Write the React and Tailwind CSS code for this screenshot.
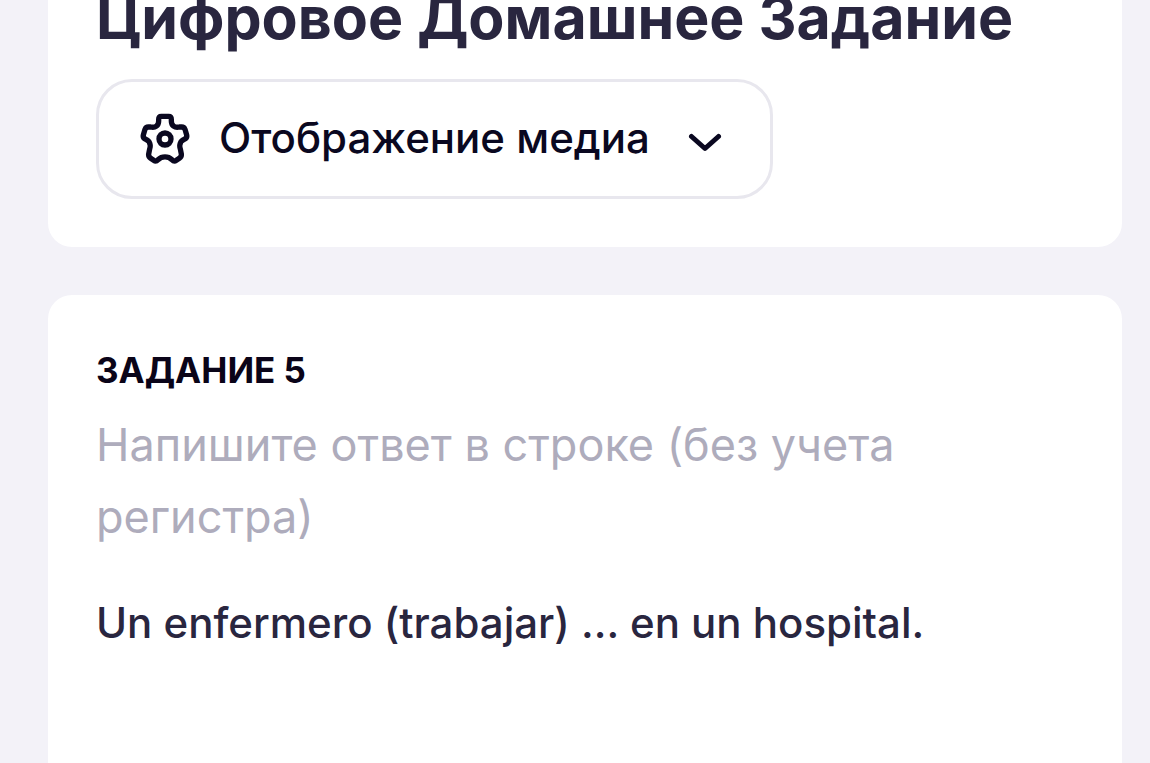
function SettingsIcon() {
  return (
    <svg
      viewBox="27 24 156 156"
      className="size-[52px] shrink-0"
      fill="none"
      stroke="currentColor"
      strokeWidth="16"
      strokeLinejoin="round"
      aria-hidden="true"
    >
      <path d="M94 34 H116 Q124 34 124 43 V48 C124 62 134 69 148 66 L153 66 Q162 65 165 73 L170 90 Q172 99 163 103 C150 108 147 120 151 132 L154 147 Q155 155 148 160 L139 166 Q132 171 126 164 C114 153 96 153 84 164 Q78 171 71 166 L62 160 Q55 155 56 147 L59 132 C63 120 60 108 47 103 Q38 99 40 90 L45 73 Q48 65 57 66 L62 66 C76 69 86 62 86 48 V43 Q86 34 94 34 Z" />
      <circle cx="105" cy="102" r="18" />
    </svg>
  );
}

function ChevronIcon() {
  return (
    <svg
      viewBox="0 0 36 24"
      className="mt-1 h-6 w-9 shrink-0"
      fill="none"
      stroke="currentColor"
      strokeWidth="5"
      strokeLinecap="round"
      strokeLinejoin="round"
      aria-hidden="true"
    >
      <path d="M5.500 7.500 L19 19.500 L32.500 7.500" />
    </svg>
  );
}

export default function App() {
  return (
    <div className="h-screen overflow-hidden bg-[#f3f2f8] pl-12 pr-7 font-['Inter',sans-serif] text-[#29263f]">
      <main className="flex flex-col gap-12">
        <header className="-mt-7 rounded-b-3xl bg-white px-12 pb-12">
          <h1 className="whitespace-nowrap pt-1 text-[59px] font-bold leading-[84px]">
            Цифровое Домашнее Задание
          </h1>
          <button
            type="button"
            className="mt-[19px] flex h-[120px] items-center rounded-[36px] border-3 border-[#e8e7ee] bg-white pl-10 pr-12 text-[42px] font-medium text-[#0a0820]"
          >
            <SettingsIcon />
            <span className="ml-7 mr-9 pb-1">Отображение медиа</span>
            <ChevronIcon />
          </button>
        </header>

        <section className="min-h-screen rounded-3xl bg-white px-12 pt-12">
          <h2 className="text-[35px] font-bold leading-[54px] text-[#0a0418]">
            ЗАДАНИЕ 5
          </h2>
          <p className="mt-3 text-[45px] leading-[72px] text-[#aeacbc]">
            Напишите ответ в строке (без учета регистра)
          </p>
          <p className="mt-10 text-[42px] font-medium leading-[60px]">
            Un enfermero (trabajar) ... en un hospital.
          </p>
        </section>
      </main>
    </div>
  );
}
